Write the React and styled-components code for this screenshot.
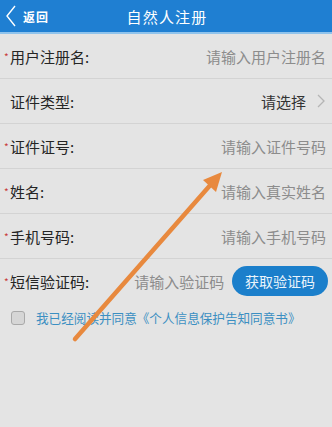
import React from "react"
import styled, { createGlobalStyle } from 'styled-components';

const GlobalStyle = createGlobalStyle`
    html, body {
        margin: 0;
        padding: 0;
        background: #e4e4e4;
    }
    body {
        font-family: "Noto Sans CJK SC", "Noto Sans", sans-serif;
    }
`;

const fields = [
    { label: '用户注册名', required: true, placeholder: '请输入用户注册名' },
    { label: '证件类型', required: false, select: '请选择' },
    { label: '证件证号', required: true, placeholder: '请输入证件号码' },
    { label: '姓名', required: true, placeholder: '请输入真实姓名' },
    { label: '手机号码', required: true, placeholder: '请输入手机号码' },
];

const App = () => {
  return (
    <StyledPage>
        <GlobalStyle/>
        <Header>
            <BackButton>
                <svg width="12" height="22" viewBox="0 0 12 22">
                    <path d="M10 1 L2 11 L10 21" fill="none" stroke="#fff" strokeWidth="1.4"/>
                </svg>
                <span>返回</span>
            </BackButton>
            <Title>自然人注册</Title>
        </Header>
        <Form>
            {fields.map((f) => (
                <Row key={f.label}>
                    <Label required={f.required}>{f.label}:</Label>
                    {f.select ? (
                        <Select>
                            <span>{f.select}</span>
                            <svg width="10" height="16" viewBox="0 0 10 16">
                                <path d="M2 2 L8 8 L2 14" fill="none" stroke="#b5b5b5" strokeWidth="1.3"/>
                            </svg>
                        </Select>
                    ) : (
                        <Input placeholder={f.placeholder}/>
                    )}
                </Row>
            ))}
            <Row last>
                <Label required>短信验证码:</Label>
                <Input short placeholder="请输入验证码"/>
                <CodeButton>获取验证码</CodeButton>
            </Row>
        </Form>
        <Agree>
            <CheckBox/>
            <span>我已经阅读并同意《个人信息保护告知同意书》</span>
        </Agree>
        <Arrow width="332" height="427" viewBox="0 0 332 427">
            <line x1="75" y1="339" x2="213" y2="182" stroke="#e8893e" strokeWidth="4.5" strokeLinecap="round"/>
            <polygon points="222,172 203,180 216,192" fill="#e8893e"/>
        </Arrow>
    </StyledPage>
  )
}

const StyledPage = styled.div`
    position: relative;
    width: 332px;
    height: 427px;
    overflow: hidden;
    background: #e4e4e4;
`;

const Header = styled.div`
    height: 32px;
    background: #1f7fd2;
    border-bottom: 2px solid #8fc3ec;
    display: flex;
    align-items: center;
    justify-content: center;
    position: relative;
`;

const BackButton = styled.div`
    position: absolute;
    left: 5px;
    top: 5px;
    display: flex;
    align-items: center;
    gap: 6px;
    color: #fff;
    font-size: 12px;
    font-weight: 700;
    span {
        letter-spacing: 1px;
    }
`;

const Title = styled.div`
    color: #fff;
    font-size: 15px;
    letter-spacing: 1.2px;
    padding-left: 2px;
`;

const Form = styled.div`
    display: flex;
    flex-direction: column;
`;

const Row = styled.div`
    height: 44px;
    display: flex;
    align-items: center;
    padding: 0 6px 0 4px;
    border-bottom: ${p => p.last ? 'none' : '1px solid #d3d3d3'};
`;

const Label = styled.div`
    position: relative;
    padding-left: 6px;
    font-size: 15px;
    color: #252525;
    white-space: nowrap;
    &::before {
        content: ${p => p.required ? "'*'" : "''"};
        position: absolute;
        left: 0;
        top: 3px;
        color: #c83a3a;
        font-size: 10px;
    }
`;

const Input = styled.input`
    flex: ${p => p.short ? '0 0 auto' : '1'};
    width: ${p => p.short ? '94px' : 'auto'};
    margin-left: ${p => p.short ? '45px' : '0'};
    min-width: 0;
    border: none;
    background: transparent;
    outline: none;
    text-align: ${p => p.short ? 'left' : 'right'};
    font-family: "Noto Sans CJK SC", sans-serif;
    font-size: 15px;
    padding: 0;
    &::placeholder {
        color: #8c8c8c;
    }
`;

const Select = styled.div`
    flex: 1;
    display: flex;
    justify-content: flex-end;
    align-items: center;
    gap: 10px;
    font-size: 15px;
    color: #333;
`;

const CodeButton = styled.div`
    margin-left: auto;
    width: 96px;
    height: 30px;
    border-radius: 15px;
    background: #1b7fcb;
    color: #eaf4fb;
    font-size: 14px;
    display: flex;
    align-items: center;
    justify-content: center;
    margin-right: -2px;
`;

const Agree = styled.div`
    display: flex;
    align-items: center;
    gap: 11px;
    padding: 5px 0 0 11px;
    font-size: 12.6px;
    color: #3b8fc2;
`;

const CheckBox = styled.div`
    width: 12px;
    height: 12px;
    border: 1px solid #a9a9a9;
    border-radius: 3px;
    background: #d6d6d6;
`;

const Arrow = styled.svg`
    position: absolute;
    left: 0;
    top: 0;
    pointer-events: none;
`;

export default App
